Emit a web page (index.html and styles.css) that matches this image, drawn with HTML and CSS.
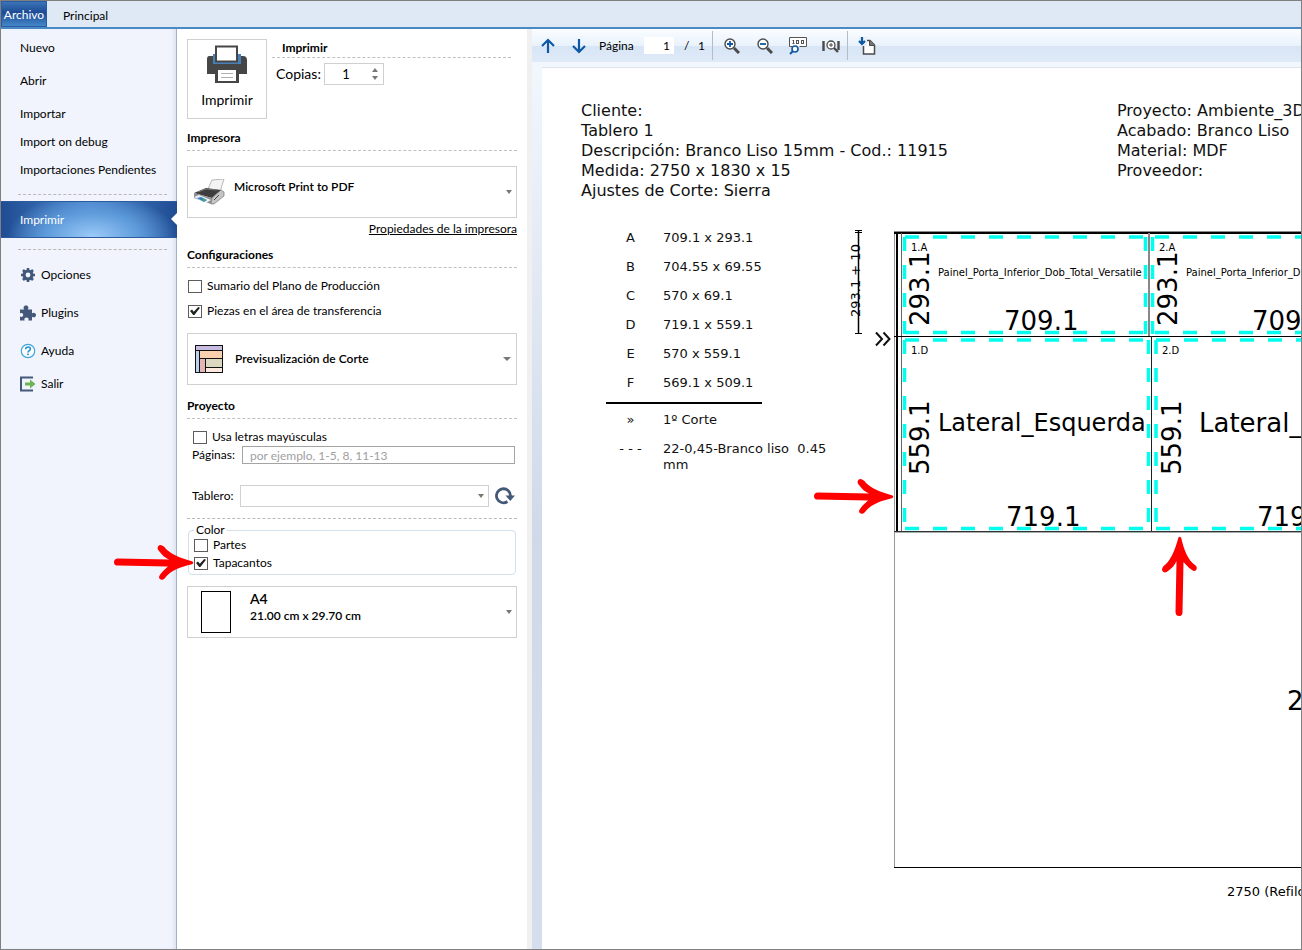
FILE: index.html
```html
<!DOCTYPE html>
<html lang="es">
<head>
<meta charset="utf-8">
<title>Imprimir</title>
<link rel="stylesheet" href="styles.css">
</head>
<body>
<svg class="defs" aria-hidden="true">
  <symbol id="arrow" viewBox="0 0 80 36">
    <path d="M4 14.500C1 14.500 0 16.500 0 18C0 21 2 21.500 4 21.500L54 22.500C50 26 46 30 45 33C45 36 49 37 51 34C56 27 66 23 77 20.500C80 20 80 17.500 77 17C66 14 57 10 52 5C50 2 48 1 46 1C43 2 43 5 45 7C48 11 51 14 55 15.500Z" fill="#f00"/>
  </symbol>
</svg>
<div class="window">
  <nav class="tabs">
    <button class="tab tab-file">Archivo</button>
    <button class="tab">Principal</button>
  </nav>
  <div class="main">
    <nav class="sidebar">
      <a class="item spaced" href="#">Nuevo</a>
      <a class="item spaced" href="#">Abrir</a>
      <a class="item" href="#">Importar</a>
      <a class="item" href="#">Import on debug</a>
      <a class="item" href="#">Importaciones Pendientes</a>
      <hr class="rule">
      <a class="item active" href="#">Imprimir</a>
      <hr class="rule">
      <div class="tools">
        <a class="item" href="#"><svg width="16" height="16" viewBox="0 0 16 16"><g stroke="#44597a" fill="none"><circle cx="8" cy="8" r="4" stroke-width="3.200"/><path d="M8 1v3M8 12v3M1 8h3M12 8h3M3 3l2 2M11 11l2 2M13 3l-2 2M5 11l-2 2" stroke-width="2.600"/></g></svg>Opciones</a>
        <a class="item" href="#"><svg width="16" height="16" viewBox="0 0 16 16"><path d="M0 4.500h4.200C2.800 2.500 4 .5 6 .5s3.200 2 1.800 4H12v3.700c2-1.200 4-.2 4 1.800s-2 3-4 1.800V15.500H8.300c1-2-.3-3-1.800-3s-2.800 1-1.800 3H0v-4c2 1 3.200 0 3.200-1.500S2 7.500 0 8.500Z" fill="#44597a"/></svg>Plugins</a>
        <a class="item spaced" href="#"><svg width="16" height="16" viewBox="0 0 16 16"><circle cx="8" cy="8" r="6.700" fill="#fff" stroke="#3fa5d8" stroke-width="1.200"/><path d="M5.700 6.200c0-3 4.700-2.900 4.700-.2C10.400 7.700 8 7.600 8 9.600M8 10.600v1.700" fill="none" stroke="#2590cf" stroke-width="1.600"/></svg>Ayuda</a>
        <a class="item" href="#"><svg width="16" height="16" viewBox="0 0 16 16"><path d="M13 1.500H1v13h12" fill="none" stroke="#44597a" stroke-width="2"/><path d="M5 6.500h5V3.500L15.500 8 10 12.500V9.500H5Z" fill="#6bb551"/></svg>Salir</a>
      </div>
    </nav>
    <form class="panel">
      <div class="print-row">
        <button type="button" class="print-button">
          <svg width="42" height="40" viewBox="0 0 42 40"><path d="M7 9h28v11H7z" fill="#4a7fb8"/><path d="M3 11h4v8h28v-8h2c3 0 4 2 4 4v14H1V14c0-2 1-3 2-3Z" fill="#464646"/><path d="M10 1.500h21v15H10z" fill="#fff" stroke="#464646" stroke-width="2"/><path d="M9 23h24v15H9z" fill="#464646"/><path d="M12 25h18v11H12z" fill="#fff"/><path d="M15 28.500h12M15 32.500h12" stroke="#b0b0b0"/></svg>
          <span>Imprimir</span>
        </button>
        <div class="print-options">
          <h2 class="heading indent">Imprimir</h2>
          <div class="copies">
            <label for="copies">Copias:</label>
            <div class="spinner">
              <input id="copies" type="number" value="1">
              <span class="steps"><button type="button" class="step up" aria-label="Más"></button><button type="button" class="step down" aria-label="Menos"></button></span>
            </div>
          </div>
        </div>
      </div>

      <h2 class="heading">Impresora</h2>
      <div class="combo printer">
        <svg width="34" height="26" viewBox="0 0 34 26"><path d="M15 12L20 1l12-1-4 13Z" fill="#f3f3f3" stroke="#aaa" stroke-width=".8"/><path d="M2 14L14 9l15 2-9 8Z" fill="#3d3d3d"/><path d="M2 14l18 5-1 6-17-6Z" fill="#8d8d8d"/><path d="M20 19l9-8 3 2v4l-10 8h-3Z" fill="#c4c4c4" stroke="#777" stroke-width=".7"/><path d="M27 16l-5 5" stroke="#444"/><path d="M2 18l5-2 12 5-5 3Z" fill="#e9f2fa"/><path d="M5 19l4-1 6 3-3 2Z" fill="#2d7fc0"/><path d="M9 21l3-1 2 1-2 1Z" fill="#58ab55"/><path d="M6 13l8-3 11 1" fill="none" stroke="#777"/></svg>
        <select aria-label="Impresora"><option>Microsoft Print to PDF</option></select>
        <span class="caret"></span>
      </div>
      <a class="link" href="#">Propiedades de la impresora</a>

      <h2 class="heading config">Configuraciones</h2>
      <label class="check config-check"><input type="checkbox">Sumario del Plano de Producción</label>
      <label class="check config-check"><input type="checkbox" checked>Piezas en el área de transferencia</label>
      <div class="combo preview">
        <svg width="28" height="28" viewBox="0 0 28 28"><rect width="28" height="28" fill="#111"/><path d="M1 1h26v4H1z" fill="#c7bce0"/><path d="M1 6h3v21H1z" fill="#bcd3ee"/><path d="M5 6h22v7H5z" fill="#fbd0ae"/><path d="M5 14h5v13H5z" fill="#e5b4b4"/><path d="M11 14h16v8H11z" fill="#dcd8c0"/><path d="M11 23h16v4H11z" fill="#fbe9e0"/></svg>
        <select aria-label="Vista"><option>Previsualización de Corte</option></select>
        <span class="caret wide"></span>
      </div>

      <h2 class="heading project">Proyecto</h2>
      <div class="project-fields">
        <label class="check"><input type="checkbox">Usa letras mayúsculas</label>
        <div class="field">
          <label for="pages">Páginas:</label>
          <input id="pages" type="text" placeholder="por ejemplo, 1-5, 8, 11-13">
        </div>
        <div class="field board">
          <label for="board">Tablero:</label>
          <div class="small-combo"><select id="board"><option></option></select><span class="caret"></span></div>
          <button type="button" class="refresh" aria-label="Actualizar"><svg width="20" height="18" viewBox="0 0 20 18"><path d="M12.500 14.500A7 7 0 1 1 15.500 9" fill="none" stroke="#44597a" stroke-width="2.800"/><path d="M10.500 8.500H20L15.300 14Z" fill="#44597a"/></svg></button>
        </div>
      </div>
      <hr class="rule">
      <fieldset class="colors">
        <legend>Color</legend>
        <div class="color-list">
          <label class="check"><input type="checkbox">Partes</label>
          <label class="check"><input type="checkbox" checked>Tapacantos</label>
        </div>
      </fieldset>
      <button type="button" class="combo paper-size">
        <span class="sheet"></span>
        <span class="size"><span class="size-name">A4</span><span>21.00 cm x 29.70 cm</span></span>
        <span class="caret"></span>
      </button>
    </form>

    <section class="viewer">
      <div class="toolbar">
        <button class="tool" aria-label="Anterior"><svg width="16" height="16" viewBox="0 0 16 16"><path d="M8 15V2M2 8l6-6 6 6" fill="none" stroke="#0f59a4" stroke-width="2.200"/></svg></button>
        <button class="tool" aria-label="Siguiente"><svg width="16" height="16" viewBox="0 0 16 16"><path d="M8 1v13M2 8l6 6 6-6" fill="none" stroke="#0f59a4" stroke-width="2.200"/></svg></button>
        <label class="page-label" for="page">Página</label>
        <input id="page" class="page-input" type="text" value="1">
        <span class="page-total"><span>/</span><span>1</span></span>
        <span class="divider"></span>
        <button class="tool zoom" aria-label="Acercar"><svg width="16" height="16" viewBox="0 0 16 16"><circle cx="6" cy="6" r="5" fill="#fff" stroke="#4b4b4b" stroke-width="1.400"/><path d="M3 6h6M6 3v6" stroke="#0f59a4" stroke-width="1.800"/><path d="M10 10l5 5" stroke="#4b4b4b" stroke-width="3"/></svg></button>
        <button class="tool zoom" aria-label="Alejar"><svg width="16" height="16" viewBox="0 0 16 16"><circle cx="6" cy="6" r="5" fill="#fff" stroke="#4b4b4b" stroke-width="1.400"/><path d="M3 6h6" stroke="#0f59a4" stroke-width="1.800"/><path d="M10 10l5 5" stroke="#4b4b4b" stroke-width="3"/></svg></button>
        <button class="tool zoom" aria-label="Tamaño real"><svg width="18" height="18" viewBox="0 0 18 18"><path d="M3.500 9.500h-3v-9h17v9h-7" fill="#fff" stroke="#555"/><path d="M4.500 3v4M3.500 3.500h1M3.500 6.500h2" stroke="#555" fill="none"/><rect x="7.500" y="3.500" width="2" height="3" fill="none" stroke="#555"/><rect x="12.500" y="3.500" width="2" height="3" fill="none" stroke="#555"/><circle cx="6" cy="12" r="3" fill="#fff" stroke="#0f59a4" stroke-width="1.600"/><path d="M4 14l-3 3" stroke="#0f59a4" stroke-width="2"/></svg></button>
        <button class="tool zoom" aria-label="Ancho de página"><svg width="18" height="14" viewBox="0 0 18 14"><path d="M1.500 2v10M16.500 2v9" stroke="#4b4b4b" stroke-width="2.400"/><circle cx="9" cy="6" r="4" fill="#fff" stroke="#4b4b4b" stroke-width="1.300"/><path d="M7 6h4M9 4v4" stroke="#4b4b4b"/><path d="M12 9l4 4" stroke="#4b4b4b" stroke-width="2.400"/></svg></button>
        <span class="divider"></span>
        <button class="tool export" aria-label="Exportar"><svg width="18" height="18" viewBox="0 0 18 18"><path d="M5.500 3.500H12l4.500 4.500v9h-11Z" fill="#fff" stroke="#4b4b4b" stroke-width="1.500"/><path d="M11.500 3v5.500H17" fill="#777" stroke="#4b4b4b"/><path d="M0 0h9v9H0z" fill="#eaf1fb"/><path d="M4 0v7M1 4l3 3 3-3" fill="none" stroke="#0f59a4" stroke-width="2.200"/></svg></button>
      </div>
      <div class="paper">
        <header class="job">
          <p>Cliente:<br>Tablero 1<br>Descripción: Branco Liso 15mm - Cod.: 11915<br>Medida: 2750 x 1830 x 15<br>Ajustes de Corte: Sierra</p>
          <p>Proyecto: Ambiente_3D<br>Acabado: Branco Liso<br>Material: MDF<br>Proveedor:</p>
        </header>
        <div class="plan">
          <table class="legend">
            <tbody>
              <tr><th>A</th><td>709.1 x 293.1</td></tr>
              <tr><th>B</th><td>704.55 x 69.55</td></tr>
              <tr><th>C</th><td>570 x 69.1</td></tr>
              <tr><th>D</th><td>719.1 x 559.1</td></tr>
              <tr><th>E</th><td>570 x 559.1</td></tr>
              <tr><th>F</th><td>569.1 x 509.1</td></tr>
            </tbody>
            <tbody class="marks">
              <tr><th>»</th><td>1º Corte</td></tr>
              <tr><th>- - -</th><td>22-0,45-Branco liso&nbsp; 0.45 mm</td></tr>
            </tbody>
          </table>
          <svg class="diagram" width="456" height="680" viewBox="846 225 456 680">
            <g fill="none" stroke="#000">
              <path d="M858.500 229v103" stroke-width="1.500"/>
              <path d="M855 229.500h7M855 231.500h7M855 332.500h7"/>
              <path d="M894.500 230v637" stroke="#999"/>
              <path d="M894 230.500h420" stroke="#888"/>
              <path d="M894 866.500h420"/>
              <path d="M894 232h420" stroke-width="2"/>
              <path d="M897 232v298" stroke-width="2"/>
              <path d="M901.500 232v298" stroke="#666"/>
              <path d="M1149 232v103" stroke="#888" stroke-width="2"/>
              <path d="M894 335.500h420"/>
              <path d="M1151.500 335v195" stroke="#222"/>
              <path d="M894 530.500h420" stroke="#333"/>
              <path d="M894 531.500h420" stroke="#aaa"/>
            </g>
            <g fill="none" stroke="#00ffef" stroke-width="3.500" stroke-dasharray="14 14">
              <path d="M905 236H1147M905 331.500H1147M1155 236h160M1155 331.500h160M905 339H1149M905 527.500H1149M1156 339h160M1156 527.500h160"/>
              <path d="M904.500 236v97M1145.500 236v97M1152.500 236v97M904.500 339v190M1148.500 339v190M1156 339v190"/>
            </g>
            <g class="small">
              <text x="911" y="250">1.A</text><text x="1159" y="250">2.A</text>
              <text x="911" y="353">1.D</text><text x="1162" y="353">2.D</text>
              <text x="938" y="275">Painel_Porta_Inferior_Dob_Total_Versatile</text>
              <text x="1186" y="275">Painel_Porta_Inferior_D</text>
            </g>
            <g class="large">
              <text x="1004" y="329">709.1</text><text x="1252" y="329">709</text>
              <text x="1006" y="525">719.1</text><text x="1257" y="525">719</text>
              <text transform="translate(929 325) rotate(-90)">293.1</text>
              <text transform="translate(1177 325) rotate(-90)">293.1</text>
              <text transform="translate(929 474) rotate(-90)">559.1</text>
              <text transform="translate(1181 474) rotate(-90)">559.1</text>
              <text x="1287" y="709">2</text>
              <text x="1199" y="431">Lateral_</text>
            </g>
            <path d="M876 331.500l6 6.500-6 6.500M883.500 331.500l6 6.500-6 6.500" fill="none" stroke="#111" stroke-width="2"/>
            <text class="name" x="938" y="430">Lateral_Esquerda</text>
            <g class="measure">
              <text transform="translate(860 316) rotate(-90)">293.1 + 10</text>
              <text x="1227" y="895">2750 (Refilo</text>
            </g>
          </svg>
        </div>
      </div>
    </section>
  </div>
  <svg class="pointer edging" width="80" height="36"><use href="#arrow"/></svg>
  <svg class="pointer left-edge" width="80" height="36"><use href="#arrow"/></svg>
  <svg class="pointer bottom-edge" width="80" height="36"><use href="#arrow"/></svg>
</div>
</body>
</html>
```
FILE: styles.css
```css
* { box-sizing: border-box; }
body { margin: 0; font: 12px/16px Lato, "Open Sans", sans-serif; color: #000; }
button, input, select { font: inherit; color: inherit; margin: 0; padding: 0; border: 0; background: none; }
select, input[type="number"] { appearance: none; outline: 0; }
svg { display: block; flex: none; }
a { color: inherit; text-decoration: none; }
.defs { position: absolute; width: 0; height: 0; }

.window { position: relative; display: flex; flex-direction: column; min-height: 100vh; border: 1px solid #808080; overflow: hidden; }
.tabs { display: flex; height: 28px; background: #dfe9f5; border-bottom: 2px solid #4a8ac4; }
.tab { padding: 4px 16px 0; }
.tab-file { width: 46px; padding: 2px 0 0; color: #fff; border: 1px solid #2a5ba5; background: linear-gradient(#3c74b8, #1c4a94 45%, #4488c9); }
.main { flex: 1; display: flex; }

.sidebar { flex: none; width: 176px; padding-top: 5px; background: #f1f4fc; border-right: 1px solid #9fb1cc; box-shadow: inset -4px 0 4px -2px #d9e0ee; }
.item { display: flex; align-items: center; gap: 5px; height: 28px; padding-left: 19px; }
.spaced { margin-bottom: 5px; }
.rule { border: 0; border-top: 1px dashed #b9b9b9; margin: 0; }
.sidebar .rule { margin: 10px 9px 6px 17px; }
.active { position: relative; height: 37px; margin-right: -1px; color: #fff; border: 1px solid #2b5b9f; border-width: 1px 0; background: radial-gradient(ellipse 85px 44px at 52% 100%, #9ccbf8, #5e9bdb 55%, transparent), linear-gradient(90deg, #1f4c93, #4b85c8 50%, #1f4c93); }
.active::after { content: ""; position: absolute; right: 0; top: 11px; border: 6px solid transparent; border-right-color: #fff; border-left: 0; }
.sidebar .active + .rule { margin-top: 11px; }
.tools { display: flex; flex-direction: column; gap: 10px; padding-top: 5px; }
.tools .spaced { margin-bottom: -5px; }

.panel { flex: none; width: 355px; padding: 10px; background: #fff; border-right: 5px solid #f0f0f0; }
.print-row { display: flex; gap: 5px; margin-bottom: 10px; }
.print-button { flex: none; width: 80px; height: 80px; display: flex; flex-direction: column; align-items: center; gap: 5px; padding-top: 5px; border: 1px solid #d0d0d0; font-size: 14px; line-height: 20px; }
.print-options { flex: 1; margin-right: 6px; }
.heading { margin: 0; height: 22px; line-height: 18px; font-size: 12px; font-weight: 700; border-bottom: 1px dashed #c0c0c0; }
.indent { height: 19px; padding-left: 10px; }
.copies { display: flex; align-items: center; padding: 5px 0 0 4px; font-size: 14px; }
.copies label { width: 48px; }
.spinner { display: flex; align-items: center; width: 60px; height: 22px; border: 1px solid #d0d0d0; font-size: 13px; }
.spinner input { width: 42px; text-align: center; }
.spinner input::-webkit-inner-spin-button { appearance: none; margin: 0; }
.steps { display: flex; flex-direction: column; gap: 4px; margin-left: 5px; }
.step { width: 0; height: 0; border: 3px solid transparent; }
.up { border-top: 0; border-bottom: 4px solid #777; }
.down { border-bottom: 0; border-top: 4px solid #777; }

.combo { display: flex; align-items: center; width: 100%; height: 52px; border: 1px solid #d0d0d0; font-weight: 600; text-align: left; }
.combo select { flex: 1; min-width: 0; }
.caret { flex: none; margin-right: 4px; border: 3px solid transparent; border-top: 4px solid #777; border-bottom: 0; }
.caret.wide { border-width: 4px 4px 0; margin-right: 5px; }
.printer { margin-top: 15px; padding-left: 4px; }
.printer select { margin: 0 0 10px 8px; }
.link { display: block; width: fit-content; margin: 3px 0 0 auto; text-decoration: underline; }
.config { margin-top: 9px; }
.check { display: flex; align-items: center; gap: 5px; height: 18px; }
.check input { appearance: none; flex: none; width: 14px; height: 13px; border: 1px solid #5c5c5c; background: #fff; display: grid; place-items: center; }
.check input:checked::before { content: ""; width: 10px; height: 8px; background: #222; clip-path: polygon(0 50%, 20% 32%, 38% 58%, 82% 0, 100% 10%, 44% 100%, 32% 100%); }
.config-check { margin: 9px 0 0 1px; }
.config-check + .config-check { margin-top: 7px; }
.preview { margin-top: 13px; padding-left: 7px; }
.preview select { margin-left: 12px; }
.project { margin-top: 12px; }
.project-fields { padding: 9px 2px 0 5px; }
.project-fields .check { padding-left: 1px; }
.field { display: flex; align-items: center; gap: 6px; height: 18px; }
.field label { width: 44px; }
.field > input { flex: 1; min-width: 0; height: 18px; padding-left: 7px; border: 1px solid #a4a4a4; }
.field > input::placeholder { color: #a0a0a0; }
.board { height: 22px; margin: 21px 0 11px; }
.board label { width: 42px; }
.small-combo { flex: 1; display: flex; align-items: center; height: 22px; border: 1px solid #d0d0d0; }
.small-combo select { flex: 1; }
.colors { height: 53px; margin: 3px 1px 11px; padding: 0 5px; border: 1px solid #d3e0ea; border-radius: 4px; }
.colors legend { padding: 0 2px; }
.color-list { margin-top: -2px; }
.paper-size { line-height: 17px; }
.sheet { width: 30px; height: 42px; margin-left: 13px; border: 1px solid #000; }
.size { flex: 1; display: flex; flex-direction: column; margin: 0 0 11px 19px; }
.size-name { font-size: 14px; }

.viewer { flex: 1; min-width: 0; display: flex; flex-direction: column; background: linear-gradient(#f5f9ff, #cfd9e9 55%, #d4deec); }
.toolbar { flex: none; display: flex; align-items: center; height: 33px; background: linear-gradient(#fbfdff, #e9f2fc 50%, #d7e5f5 52%, #dfeaf8); }
.tool { flex: none; width: 31px; height: 30px; display: flex; align-items: center; justify-content: center; }
.zoom { width: 33px; }
.page-label { width: 50px; padding-left: 5px; }
.page-input { width: 30px; height: 17px; padding-right: 4px; text-align: right; background: #fff; }
.page-total { display: flex; justify-content: space-between; width: 21px; margin: 0 7px 0 10px; }
.divider { width: 1px; height: 29px; background: #b5bcc6; margin-right: 2px; }
.export { width: 34px; }

.paper { flex: 1; margin: 5px 0 0 10px; padding: 33px 0 0; background: #fff; border-top: 1px solid #dfe4e8; overflow: hidden; font-family: "DejaVu Sans", Verdana, sans-serif; color: #111; }
.job { display: flex; padding-left: 39px; font-size: 16px; line-height: 20px; }
.job p { flex: none; width: 536px; margin: 0; white-space: nowrap; }
.plan { display: flex; padding: 25px 0 0 64px; }
.legend { flex: none; width: 240px; height: fit-content; margin-top: 4px; border-collapse: collapse; font-size: 13px; line-height: 16px; }
.legend th { width: 49px; padding: 0; font-weight: 400; vertical-align: top; }
.legend td { height: 29px; padding: 0 10px 0 8px; vertical-align: top; }
.legend tbody:first-child tr:last-child td { height: 27px; }
.marks { background: linear-gradient(#000, #000) 0 0 / 156px 2px no-repeat; }
.marks tr:first-child > * { padding-top: 10px; height: 39px; }
.diagram { overflow: visible; }
.small { font-size: 10px; }
.large { font-size: 26px; }
.name { font-size: 24px; }
.measure { font-size: 13px; }

.pointer { position: absolute; }
.edging { left: 113px; top: 543px; }
.left-edge { left: 813px; top: 477px; }
.bottom-edge { left: 1138px; top: 557px; transform: rotate(-90deg); }
```
